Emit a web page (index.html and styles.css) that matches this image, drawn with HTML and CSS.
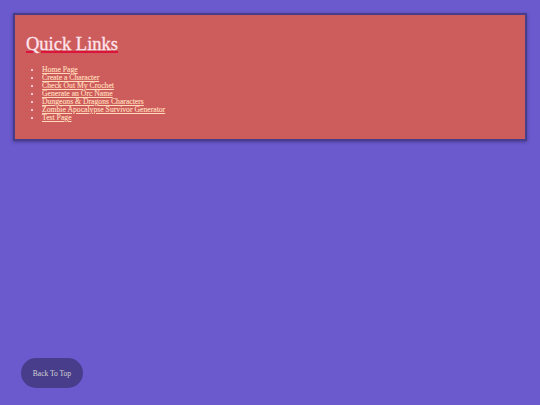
FILE: index.html
```html
<!DOCTYPE html>
<html lang="en">
<head>
<meta charset="utf-8">
<title>Quick Links</title>
<link rel="stylesheet" href="styles.css">
</head>
<body>
<main class="panel">
  <h1 class="title">Quick Links</h1>
  <ul class="links">
    <li><a href="#">Home Page</a></li>
    <li><a href="#">Create a Character</a></li>
    <li><a href="#">Check Out My Crochet</a></li>
    <li><a href="#">Generate an Orc Name</a></li>
    <li><a href="#">Dungeons &amp; Dragons Characters</a></li>
    <li><a href="#">Zombie Apocalypse Survivor Generator</a></li>
    <li><a href="#">Test Page</a></li>
  </ul>
</main>
<a class="back-top" href="#">Back To Top</a>
</body>
</html>
```

FILE: styles.css
```css
html, body {
  margin: 0;
  padding: 0;
}
body {
  background: #6a5acd;
  padding: 13px;
  min-height: 405px;
  box-sizing: border-box;
  font-family: "Liberation Serif", serif;
}
.panel {
  background: #cd5c5c;
  border: 2px solid #483d8b;
  padding: 17px 11px 17px;
  box-shadow: 0 1px 3px rgba(40, 30, 90, 0.5);
}
.title {
  margin: 0 0 10px;
  font-family: "Liberation Serif", serif;
  font-weight: normal;
  font-size: 18.5px;
  line-height: 24px;
  color: #ffe4ef;
  -webkit-text-stroke: 0.3px #ffe4ef;
  text-decoration: underline;
  text-decoration-color: #dc143c;
  text-decoration-thickness: 2px;
  text-underline-offset: 1px;
}
.links {
  margin: 0;
  padding-left: 16px;
  font-size: 7.7px;
  line-height: 8px;
  color: #fff0f0;
}
.links a {
  color: #ffdab9;
  -webkit-text-stroke: 0.15px #ffdab9;
}
.back-top {
  position: fixed;
  left: 21px;
  bottom: 17px;
  width: 62px;
  height: 30px;
  border-radius: 15px;
  background: #483d8b;
  color: #d3d3d3;
  font-size: 7.5px;
  display: flex;
  align-items: center;
  justify-content: center;
  text-decoration: none;
}
```
